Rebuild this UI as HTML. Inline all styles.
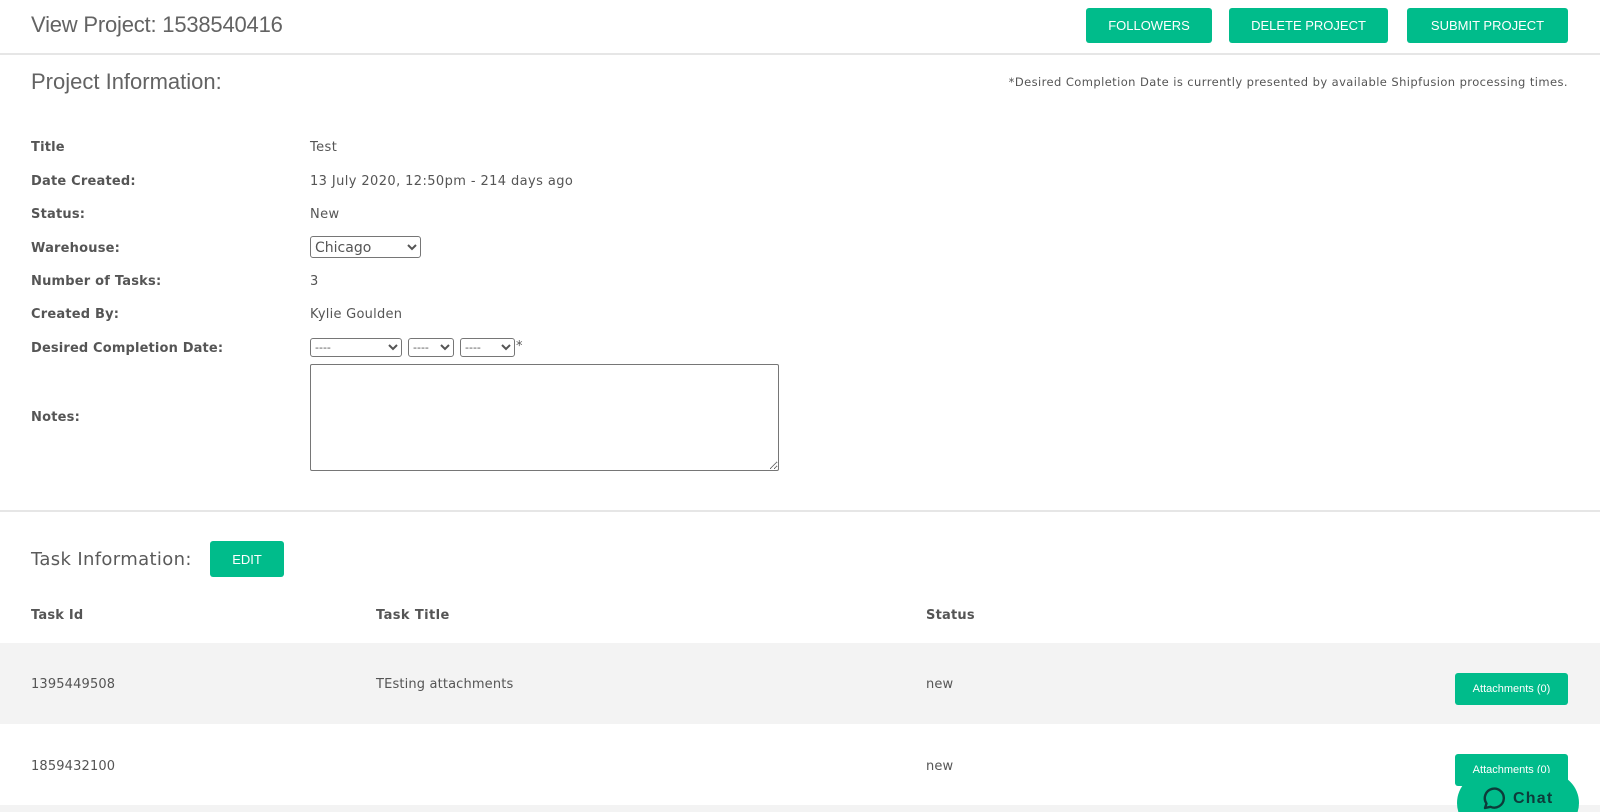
<!DOCTYPE html>
<html><head><meta charset="utf-8"><title>View Project</title>
<style>
html,body{margin:0;padding:0;background:#fff;width:1600px;height:812px;overflow:hidden}
#p{position:relative;width:1600px;height:812px;overflow:hidden;font-family:"DejaVu Sans",sans-serif;font-size:13px;color:#555;background:#fff}
.a{position:absolute;white-space:nowrap;line-height:20px}
.l{left:31px;font-weight:bold;letter-spacing:.2px}
.v{left:310px;letter-spacing:.4px}
.t{letter-spacing:.15px}
.h{font-family:"Liberation Sans",sans-serif;font-size:22px;color:#636363;line-height:28px}
.b{position:absolute;background:#00bc8b;color:#fff;border-radius:3px;font-family:"Liberation Sans",sans-serif;font-size:13px;display:flex;align-items:center;justify-content:center}
.r{position:absolute;left:0;width:1600px;background:#f3f3f3}
.hr{position:absolute;left:0;width:1600px;height:2px;background:#e6e6e6}
select{position:absolute;box-sizing:border-box;background:#fff;border:1px solid #767676;border-radius:3px;color:#555;font-family:"DejaVu Sans",sans-serif;margin:0}
textarea{position:absolute;box-sizing:border-box;margin:0;background:#fff;border:1px solid #767676;border-radius:2px}
</style></head><body><div id="p">
<div class="a h" style="left:31px;top:11px;letter-spacing:-.2px">View Project: 1538540416</div>
<div class="b" style="left:1086px;top:8px;width:126px;height:35px">FOLLOWERS</div>
<div class="b" style="left:1229px;top:8px;width:159px;height:35px">DELETE PROJECT</div>
<div class="b" style="left:1407px;top:8px;width:161px;height:35px">SUBMIT PROJECT</div>
<div class="hr" style="top:53px"></div>

<div class="a h" style="left:31px;top:68px">Project Information:</div>
<div class="a" style="right:32px;top:72px;font-size:11.5px;letter-spacing:.42px">*Desired Completion Date is currently presented by available Shipfusion processing times.</div>

<div class="a l" style="top:138px">Title</div><div class="a v" style="top:138px">Test</div>
<div class="a l" style="top:172px">Date Created:</div><div class="a v" style="top:172px">13 July 2020, 12:50pm - 214 days ago</div>
<div class="a l" style="top:205px">Status:</div><div class="a v" style="top:205px">New</div>
<div class="a l" style="top:239px">Warehouse:</div>
<select style="left:310px;top:236px;width:111px;height:22px;font-size:14px;padding-top:2px"><option>Chicago</option></select>
<div class="a l" style="top:272px">Number of Tasks:</div><div class="a v" style="top:272px">3</div>
<div class="a l" style="top:305px">Created By:</div><div class="a v" style="top:305px;letter-spacing:.25px">Kylie Goulden</div>
<div class="a l" style="top:339px;letter-spacing:.15px">Desired Completion Date:</div>
<select style="left:310px;top:338px;width:92px;height:19px;font-size:11px"><option>----</option></select>
<select style="left:408px;top:338px;width:46px;height:19px;font-size:11px"><option>----</option></select>
<select style="left:460px;top:338px;width:55px;height:19px;font-size:11px"><option>----</option></select>
<div class="a" style="left:516px;top:337px">*</div>
<div class="a l" style="top:408px">Notes:</div>
<textarea style="left:310px;top:364px;width:469px;height:107px"></textarea>

<div class="hr" style="top:510px"></div>

<div class="a h" style="left:31px;top:546px;font-family:'DejaVu Sans',sans-serif;font-size:18px;letter-spacing:.35px;color:#5a5a5a">Task Information:</div>
<div class="b" style="left:210px;top:541px;width:74px;height:36px">EDIT</div>

<div class="a l" style="left:31px;top:606px">Task Id</div>
<div class="a" style="left:376px;top:606px;font-weight:bold;letter-spacing:.4px">Task Title</div>
<div class="a" style="left:926px;top:606px;font-weight:bold;letter-spacing:.2px">Status</div>

<div class="r" style="top:643px;height:81px"></div>
<div class="a t" style="left:31px;top:675px">1395449508</div>
<div class="a t" style="left:376px;top:675px">TEsting attachments</div>
<div class="a t" style="left:926px;top:675px">new</div>
<div class="b" style="left:1455px;top:673px;width:113px;height:32px;font-size:11px">Attachments (0)</div>

<div class="a t" style="left:31px;top:757px">1859432100</div>
<div class="a t" style="left:926px;top:757px">new</div>
<div class="b" style="left:1455px;top:754px;width:113px;height:32px;font-size:11px">Attachments (0)</div>

<div class="r" style="top:805px;height:7px"></div>

<div style="position:absolute;left:1457px;top:773px;width:122px;height:60px;border-radius:30px;background:#00bc8b"></div>
<svg style="position:absolute;left:1481px;top:786px" width="24" height="24" viewBox="0 0 24 24" fill="none"><path d="M4 22 L5.5 17.5 A9.5 9.5 0 1 1 9.5 20.8 Z" stroke="#0d3b3a" stroke-width="2.4" stroke-linejoin="round"/></svg>
<div class="a" style="left:1513px;top:789px;font-family:'Liberation Sans',sans-serif;font-weight:bold;font-size:16px;letter-spacing:1.2px;color:#0d3b3a">Chat</div>
</div></body></html>
